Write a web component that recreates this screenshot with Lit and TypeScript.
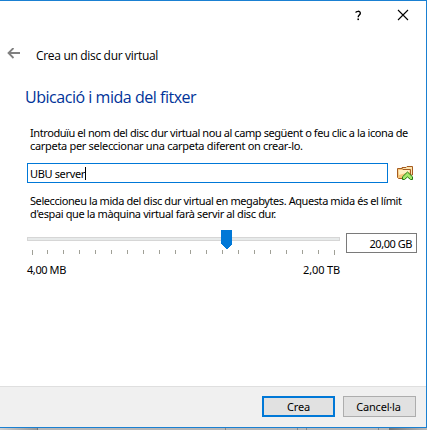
import { LitElement, html, css, svg } from "lit";
import { customElement } from "lit/decorators.js";

const TICKS = [32, 47, 63, 79, 95, 111, 127, 143, 159, 175, 190, 206, 222, 238, 254, 270, 286, 302, 318, 334];

@customElement("app-root")
export class AppRoot extends LitElement {
  static styles = css`
    :host {
      display: block;
      width: 427px;
      height: 430px;
      overflow: hidden;
      background: #b9b9b9;
      font-family: "Noto Sans", sans-serif;
      font-size: 11px;
      line-height: 13px;
      color: #000;
    }
    * { box-sizing: border-box; }
    svg { display: block; flex: none; }
    .dialog {
      display: flex;
      flex-direction: column;
      height: 428px;
      border: 1px solid #1a80d2;
      border-left: 0;
      background: #fff;
    }
    .controls {
      display: flex;
      justify-content: flex-end;
      height: 39px;
      padding: 8px 17px 0 0;
    }
    .controls svg + svg { margin-left: 35px; }
    .title {
      display: flex;
      align-items: center;
      height: 28px;
      padding-left: 7px;
      font-family: "Open Sans", sans-serif;
      font-size: 12px;
    }
    .title span { margin: 3px 0 0 16px; letter-spacing: -0.32px; white-space: nowrap; }
    .heading {
      height: 22px;
      margin: 18px 0 0 25px;
      font: 400 16px/22px "Open Sans", sans-serif;
      letter-spacing: -0.47px;
      color: #003399;
      white-space: nowrap;
    }
    .para { margin-left: 30px; height: 26px; white-space: nowrap; }
    .para div { height: 13px; line-height: 12px; }
    .first { margin-top: 19px; }
    .second { margin-top: 12px; }
    .row { display: flex; align-items: center; height: 20px; margin: 10px 0 0 27px; }
    .input {
      display: flex;
      align-items: center;
      width: 361px;
      height: 20px;
      padding: 1px 0 0 2px;
      border: 1px solid #0078d7;
    }
    .caret { width: 1px; height: 13px; background: #000; }
    .folder { margin-left: 9px; }
    .slider { display: flex; align-items: flex-start; height: 32px; margin: 8px 0 0 27px; }
    .size {
      width: 71px;
      height: 20px;
      margin: 4px 0 0 6px;
      padding: 3px 4px 0 0;
      border: 1px solid #7a7a7a;
      text-align: right;
      white-space: nowrap;
    }
    .range { display: flex; justify-content: space-between; width: 313px; margin: 2px 0 0 27px; }
    .footer {
      display: flex;
      justify-content: flex-end;
      gap: 8px;
      height: 41px;
      margin-top: auto;
      padding: 9px 10px 0 0;
      border-top: 1px solid #dfdfdf;
      background: #f0f0f0;
    }
    .button {
      width: 73px;
      height: 21px;
      padding: 0 2px 0 0;
      border: 1px solid #adadad;
      background: #e1e1e1;
      text-align: center;
      line-height: 19px;
      letter-spacing: -0.2px;
    }
    .primary { border: 2px solid #0078d7; padding-right: 0; line-height: 17px; }
    .behind { display: flex; height: 2px; background: #b8b8b8; }
    .behind i { display: block; height: 2px; }
    .b1 { width: 37px; background: linear-gradient(90deg, #d0d0d0, #999); }
    .b2 { width: 189px; border-left: 1px solid #777; border-right: 1px solid #888; }
    .b3 { width: 72px; margin: 0 8px 0 0; border-right: 1px solid #888; }
    .b4 { width: 73px; border-left: 1px solid #888; border-right: 1px solid #888; }
    .b5 { flex: 1; margin-left: 10px; background: linear-gradient(90deg, #777, #bbb); }
    .l1 { letter-spacing: -0.42px; }
    .l2 { letter-spacing: -0.31px; }
    .l3 { letter-spacing: -0.42px; }
    .l4 { letter-spacing: -0.38px; }
    .value { letter-spacing: -0.35px; }
    .v2 { letter-spacing: -0.45px; }
    .r1 { letter-spacing: -0.42px; }
    .r2 { letter-spacing: -0.15px; }
  `;

  render() {
    return html`
      <div class="dialog">
        <div class="controls">
          <svg width="8" height="14" viewBox="0 0 8 14">
            <path d="M1.7 3.6C2 2.2 6.3 1.4 6.3 4.2C6.3 6 4.2 6 4.2 8.2" fill="none" stroke="#000" stroke-width="1.4"/>
            <rect x="3.4" y="9.5" width="1.6" height="1.6"/>
          </svg>
          <svg width="12" height="12" viewBox="0 0 12 12">
            <path d="M1 1L11 11M11 1L1 11" stroke="#000" stroke-width="1.1"/>
          </svg>
        </div>
        <div class="title">
          <svg width="13" height="12" viewBox="0 0 13 12">
            <path d="M1.5 5H13M6.5 0L1.5 5L6.5 10" fill="none" stroke="#808080" stroke-width="1.8"/>
          </svg>
          <span>Crea un disc dur virtual</span>
        </div>
        <div class="heading">Ubicació i mida del fitxer</div>
        <div class="para first">
          <div><span class="l1">Introduïu el nom del disc dur virtual nou al camp següent o feu clic a la icona de</span></div>
          <div><span class="l2">carpeta per seleccionar una carpeta diferent on crear-lo.</span></div>
        </div>
        <div class="row">
          <div class="input"><span class="value">UBU server</span><span class="caret"></span></div>
          <svg class="folder" width="16" height="16" viewBox="0 0 16 16">
            <path d="M5 4V2.5H9L10 1.5H15.5V10H5Z" fill="#fbe3ae" stroke="#a65c20"/>
            <path d="M.5 3.5H5L6 4.5H13.5V13.5H1.5L.5 12.5Z" fill="#f6c67a" stroke="#a65c20"/>
            <path d="M1.5 5H12.5V7L2 10Z" fill="#fff0c4"/>
            <path d="M8 14L10.5 11.5L13 14V16H8Z" fill="#fff"/>
            <path d="M10.5 7L15.5 11.8V14.5H13.5L10.5 11.9L7.5 14.5H5.5V11.8Z" fill="#a4e86a" stroke="#267b14"/>
          </svg>
        </div>
        <div class="para second">
          <div><span class="l3">Seleccioneu la mida del disc dur virtual en megabytes. Aquesta mida és el límit</span></div>
          <div><span class="l4">d'espai que la màquina virtual farà servir al disc dur.</span></div>
        </div>
        <div class="slider">
          <svg width="313" height="27" viewBox="27 229 313 27" shape-rendering="crispEdges">
            <rect x="27.5" y="237.5" width="312" height="3" fill="#e7eaea" stroke="#d6d6d6"/>
            ${TICKS.map((x, i) => svg`<rect x=${x} y="250" width="1" height=${i === 0 || i === TICKS.length - 1 ? 5 : 4} fill="#a0a097"/>`)}
            <path d="M221 230H232V244L226.5 249.5L221 244Z" fill="#0078d7"/>
          </svg>
          <div class="size"><span class="v2">20,00 GB</span></div>
        </div>
        <div class="range"><span class="r1">4,00 MB</span><span class="r2">2,00 TB</span></div>
        <div class="footer">
          <div class="button primary"><span>Crea</span></div>
          <div class="button"><span>Cancel·la</span></div>
        </div>
      </div>
      <div class="behind"><i class="b1"></i><i class="b2"></i><i class="b3"></i><i class="b4"></i><i class="b5"></i></div>
    `;
  }
}
